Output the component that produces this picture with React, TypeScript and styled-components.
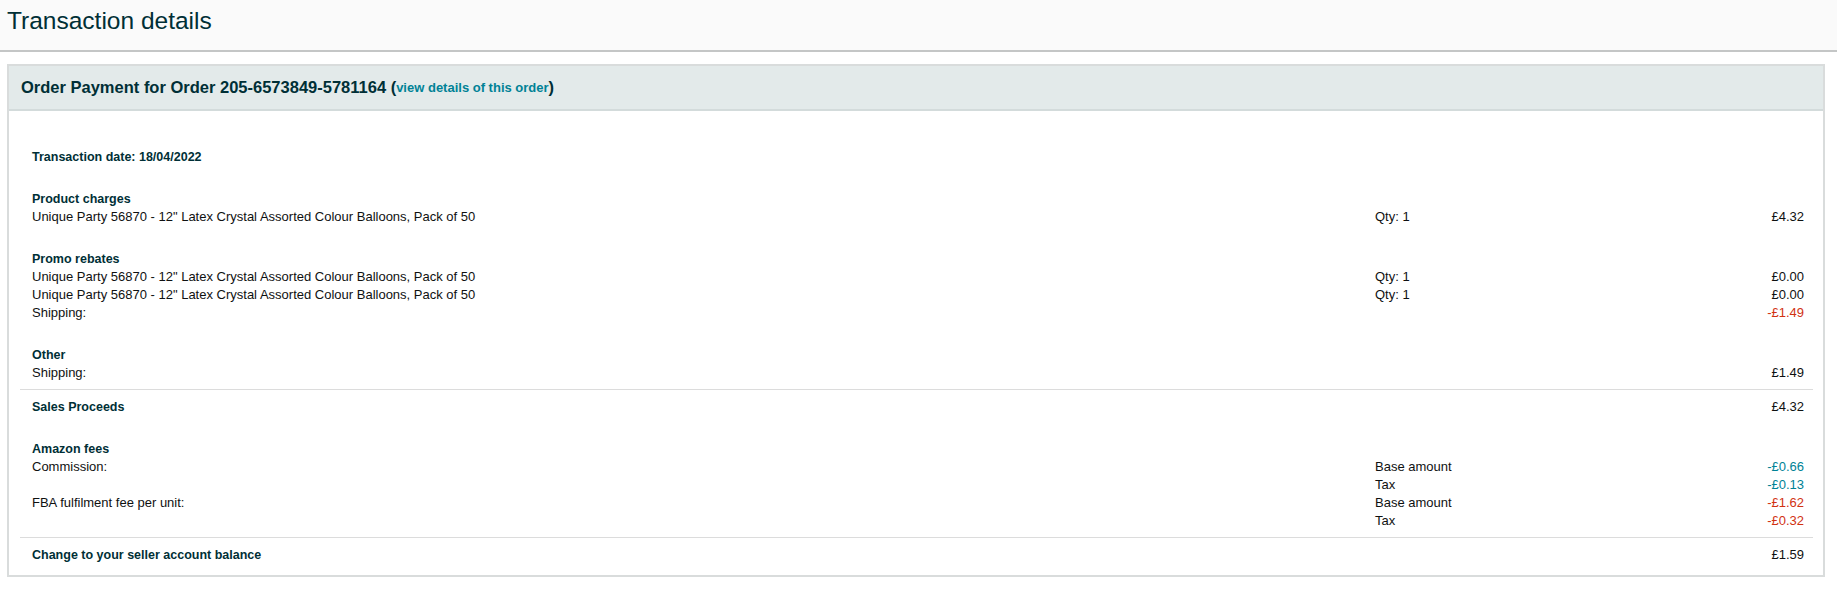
import styled, { createGlobalStyle } from "styled-components"

const GlobalStyle = createGlobalStyle`
	body {
		margin: 0;
		background: #ffffff;
		font-family: "Liberation Sans", Arial, sans-serif;
		color: #002f36;
	}
`

type Tone = "plain" | "loss" | "fee"

type Line = {
	label: string
	qty?: string
	amount?: string
	tone?: Tone
}

const promoItem = "Unique Party 56870 - 12\" Latex Crystal Assorted Colour Balloons, Pack of 50"

const App = () => {
	return (
		<Page>
			<GlobalStyle />
			<TopBar>
				<Title>Transaction details</Title>
			</TopBar>
			<Panel>
				<PanelHeader>
					Order Payment for Order 205-6573849-5781164 (<OrderLink href="#">view details of this order</OrderLink>)
				</PanelHeader>
				<PanelBody>
					<Section>
						<Heading>Transaction date: 18/04/2022</Heading>
					</Section>
					<Section>
						<Heading>Product charges</Heading>
						<Row line={{ label: promoItem, qty: "Qty: 1", amount: "£4.32" }} />
					</Section>
					<Section>
						<Heading>Promo rebates</Heading>
						<Row line={{ label: promoItem, qty: "Qty: 1", amount: "£0.00" }} />
						<Row line={{ label: promoItem, qty: "Qty: 1", amount: "£0.00" }} />
						<Row line={{ label: "Shipping:", amount: "-£1.49", tone: "loss" }} />
					</Section>
					<Section $divided>
						<Heading>Other</Heading>
						<Row line={{ label: "Shipping:", amount: "£1.49" }} />
					</Section>
					<Summary>
						<Heading>Sales Proceeds</Heading>
						<span />
						<Amount $tone="plain">£4.32</Amount>
					</Summary>
					<Section $divided>
						<Heading>Amazon fees</Heading>
						<Row line={{ label: "Commission:", qty: "Base amount", amount: "-£0.66", tone: "fee" }} />
						<Row line={{ label: "", qty: "Tax", amount: "-£0.13", tone: "fee" }} />
						<Row line={{ label: "FBA fulfilment fee per unit:", qty: "Base amount", amount: "-£1.62", tone: "loss" }} />
						<Row line={{ label: "", qty: "Tax", amount: "-£0.32", tone: "loss" }} />
					</Section>
					<Summary $last>
						<Heading>Change to your seller account balance</Heading>
						<span />
						<Amount $tone="plain">£1.59</Amount>
					</Summary>
				</PanelBody>
			</Panel>
		</Page>
	)
}

const Row = ({ line }: { line: Line }) => (
	<LineRow>
		<span>{line.label}</span>
		<span>{line.qty}</span>
		<Amount $tone={line.tone || "plain"}>{line.amount}</Amount>
	</LineRow>
)

const toneColours: Record<Tone, string> = {
	plain: "#0f1111",
	loss: "#d13212",
	fee: "#008296",
}

const Page = styled.div`
	width: 100%;
	padding-bottom: 14px;
`

const TopBar = styled.header`
	background: #fafafa;
	border-bottom: 2px solid #c4c6c6;
	padding: 7px 7px 15px;
`

const Title = styled.h1`
	margin: 0;
	font-size: 24.5px;
	line-height: 28px;
	font-weight: 400;
	color: #002f36;
`

const Panel = styled.section`
	margin: 12px 12px 0 7px;
	border: 2px solid #d9dcdc;
`

const PanelHeader = styled.div`
	display: flex;
	align-items: center;
	white-space: pre;
	height: 45px;
	box-sizing: border-box;
	background: #e3eaea;
	border-bottom: 2px solid #d3dbdb;
	padding: 0 12px 1px;
	font-size: 16.5px;
	font-weight: 700;
	color: #002f36;
`

const OrderLink = styled.a`
	color: #008296;
	font-size: 13px;
	text-decoration: none;
`

const PanelBody = styled.div`
	padding: 37px 10px 0 11px;
	font-size: 13px;
	line-height: 18px;
`

const Section = styled.div<{ $divided?: boolean }>`
	padding: 0 9px 0 12px;
	margin-bottom: 24px;
	${(p) => p.$divided && `
		margin-bottom: 0;
		padding-bottom: 7px;
		border-bottom: 1px solid #dcdcdc;
	`}
`

const Heading = styled.div`
	font-size: 12.5px;
	font-weight: 700;
	color: #002f36;
`

const LineRow = styled.div`
	display: grid;
	grid-template-columns: 1fr 200px 229px;
	color: #0f1111;
`

const Summary = styled(LineRow)<{ $last?: boolean }>`
	padding: 8px 9px ${(p) => (p.$last ? "11px" : "24px")} 12px;
`

const Amount = styled.span<{ $tone: Tone }>`
	text-align: right;
	color: ${(p) => toneColours[p.$tone]};
`

export default App
